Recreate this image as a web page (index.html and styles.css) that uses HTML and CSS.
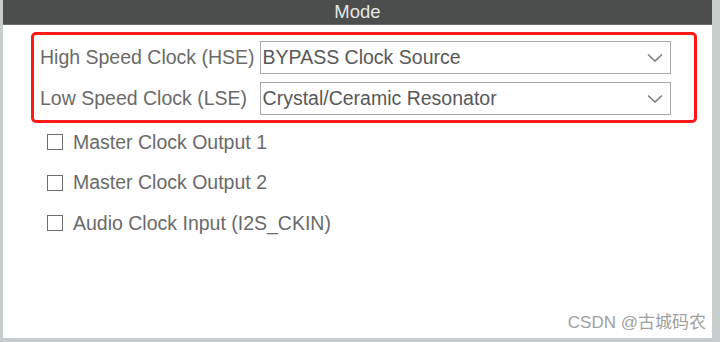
FILE: index.html
```html
<!DOCTYPE html>
<html lang="en">
<head>
    <meta charset="UTF-8">
    <title>RCC Mode</title>
    <link rel="stylesheet" href="styles.css">
</head>
<body>
    <div class="panel">
        <div class="panel-header">Mode</div>

        <div class="panel-body">
            <div class="highlight">
                <div class="field-grid">
                    <label class="field-label">High Speed Clock (HSE)</label>
                    <div class="select">
                        <span>BYPASS Clock Source</span>
                        <svg class="chevron" viewBox="0 0 16 10" width="16" height="10">
                            <path d="M1 1.5 L8 8 L15 1.5" fill="none" stroke="#777" stroke-width="1.4"/>
                        </svg>
                    </div>

                    <label class="field-label">Low Speed Clock (LSE)</label>
                    <div class="select">
                        <span>Crystal/Ceramic Resonator</span>
                        <svg class="chevron" viewBox="0 0 16 10" width="16" height="10">
                            <path d="M1 1.5 L8 8 L15 1.5" fill="none" stroke="#777" stroke-width="1.4"/>
                        </svg>
                    </div>
                </div>
            </div>

            <ul class="check-list">
                <li><span class="checkbox"></span>Master Clock Output 1</li>
                <li><span class="checkbox"></span>Master Clock Output 2</li>
                <li><span class="checkbox"></span>Audio Clock Input (I2S_CKIN)</li>
            </ul>
        </div>

        <div class="watermark">CSDN @古城码农</div>
    </div>
</body>
</html>
```

FILE: styles.css
```css
* {
    margin: 0;
    padding: 0;
    box-sizing: border-box;
}

body {
    font-family: "Liberation Sans", "Noto Sans CJK SC", sans-serif;
    background: #c7cccd;
    width: 720px;
    height: 342px;
    overflow: hidden;
}

.panel {
    position: relative;
    margin-left: 3px;
    width: 709px;
    height: 338px;
    background: #fff;
}

.panel-header {
    height: 25px;
    background: #4b4e4c;
    color: #e6e6e6;
    font-size: 18.5px;
    line-height: 24px;
    text-align: center;
    border-bottom: 1px solid #6d706e;
}

.panel-body {
    padding: 7px 12px 0 28px;
}

.highlight {
    width: 666px;
    height: 91px;
    border: 3px solid #ff1a17;
    border-radius: 5px;
    padding: 6px 23px 0 6px;
}

.field-grid {
    display: grid;
    grid-template-columns: auto 1fr;
    column-gap: 5px;
    row-gap: 8px;
    align-items: center;
}

.field-label {
    color: #6a6a6a;
    font-size: 19.5px;
    white-space: nowrap;
}

.select {
    height: 33px;
    border: 1px solid #a9a9a9;
    display: flex;
    align-items: center;
    justify-content: space-between;
    padding: 0 7px 0 2px;
    color: #585858;
    font-size: 19.5px;
}

.chevron {
    display: block;
}

.check-list {
    list-style: none;
    padding: 0 0 0 16px;
}

.check-list li {
    display: flex;
    align-items: center;
    height: 40.5px;
    margin-top: -1px;
    margin-bottom: 1px;
    color: #6a6a6a;
    font-size: 19.5px;
}

.checkbox {
    width: 16px;
    height: 16px;
    border: 1.5px solid #6e6e6e;
    margin-right: 10px;
}

.watermark {
    position: absolute;
    right: 6px;
    bottom: 5px;
    color: #a0a0a0;
    font-size: 17px;
}
```
